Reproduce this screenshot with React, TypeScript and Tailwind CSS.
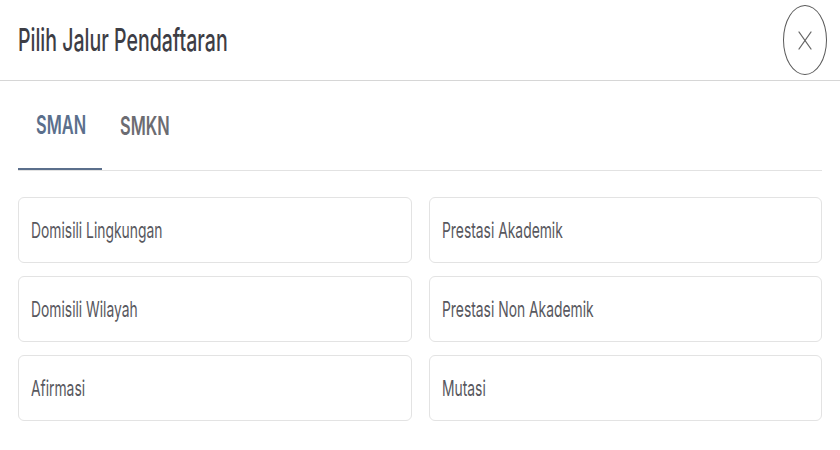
import React from "react";

function T({ children, className = "" }: { children: React.ReactNode; className?: string }) {
  return (
    <span className={"inline-block origin-left scale-x-[0.63] whitespace-nowrap " + className}>
      {children}
    </span>
  );
}

const items = [
  "Domisili Lingkungan",
  "Prestasi Akademik",
  "Domisili Wilayah",
  "Prestasi Non Akademik",
  "Afirmasi",
  "Mutasi",
];

export default function App() {
  return (
    <div className="w-[840px] h-[450px] overflow-hidden bg-white font-['Inter','Noto_Sans',sans-serif]">
      <div className="flex h-[81px] items-center justify-between border-b border-[#d6d6d6] pl-[18px] pr-[13px]">
        <h1 className="text-[31px] leading-[38px] font-medium text-[#3d3d45]">
          <T>Pilih Jalur Pendaftaran</T>
        </h1>
        <button className="flex h-[70px] w-[44px] items-center justify-center rounded-[50%] border border-[#5a5a5a]">
          <svg width="14" height="19" viewBox="0 0 14 19" fill="none" stroke="#666666" strokeWidth="1.3" strokeLinecap="round">
            <line x1="1" y1="1" x2="13" y2="18" />
            <line x1="13" y1="1" x2="1" y2="18" />
          </svg>
        </button>
      </div>

      <div className="mx-[18px] flex border-b border-[#e2e2e2]">
        <div className="-mb-px flex h-[89px] w-[84px] items-center border-b-2 border-[#5b6f8c] pl-[18px]">
          <span className="text-[26px] leading-[32px] font-semibold text-[#5b6f8c]">
            <T>SMAN</T>
          </span>
        </div>
        <div className="flex h-[89px] items-center pl-[18px]">
          <span className="text-[26px] leading-[32px] font-semibold text-[#6c6c72]">
            <T>SMKN</T>
          </span>
        </div>
      </div>

      <div className="grid grid-cols-2 gap-x-[17px] gap-y-[13px] px-[18px] pt-[26px]">
        {items.map((it) => (
          <div
            key={it}
            className="flex h-[66px] items-center rounded-[6px] border border-[#e3e3e3] pl-[12px]"
          >
            <span className="text-[22px] leading-[28px] text-[#58585e]">
              <T>{it}</T>
            </span>
          </div>
        ))}
      </div>
    </div>
  );
}
